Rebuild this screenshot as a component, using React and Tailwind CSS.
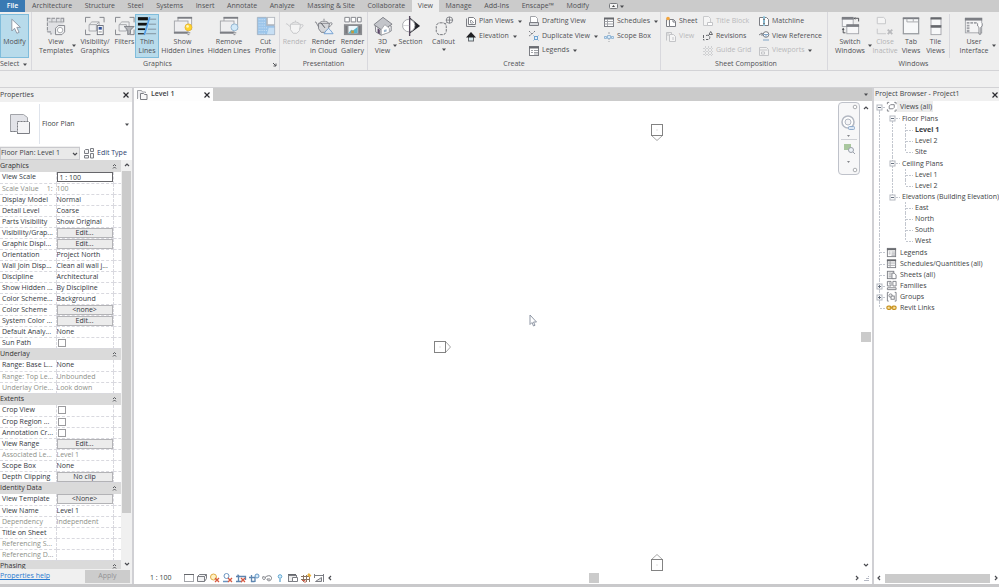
import { useState } from 'react';

const TABS = [
  'Architecture', 'Structure', 'Steel', 'Systems', 'Insert', 'Annotate', 'Analyze',
  'Massing & Site', 'Collaborate', 'View', 'Manage', 'Add-Ins', 'Enscape™', 'Modify',
];

const PROPERTY_GROUPS = [
  {
    title: 'Graphics',
    rows: [
      { label: 'View Scale', value: '1 : 100', type: 'input' },
      { label: 'Scale Value', suffix: '1:', value: '100', muted: true },
      { label: 'Display Model', value: 'Normal' },
      { label: 'Detail Level', value: 'Coarse' },
      { label: 'Parts Visibility', value: 'Show Original' },
      { label: 'Visibility/Grap...', value: 'Edit...', type: 'button' },
      { label: 'Graphic Displ...', value: 'Edit...', type: 'button' },
      { label: 'Orientation', value: 'Project North' },
      { label: 'Wall Join Disp...', value: 'Clean all wall j...' },
      { label: 'Discipline', value: 'Architectural' },
      { label: 'Show Hidden ...', value: 'By Discipline' },
      { label: 'Color Scheme...', value: 'Background' },
      { label: 'Color Scheme', value: '<none>', type: 'button' },
      { label: 'System Color ...', value: 'Edit...', type: 'button' },
      { label: 'Default Analy...', value: 'None' },
      { label: 'Sun Path', type: 'checkbox' },
    ],
  },
  {
    title: 'Underlay',
    rows: [
      { label: 'Range: Base L...', value: 'None' },
      { label: 'Range: Top Le...', value: 'Unbounded', muted: true },
      { label: 'Underlay Orie...', value: 'Look down', muted: true },
    ],
  },
  {
    title: 'Extents',
    rows: [
      { label: 'Crop View', type: 'checkbox' },
      { label: 'Crop Region ...', type: 'checkbox' },
      { label: 'Annotation Cr...', type: 'checkbox' },
      { label: 'View Range', value: 'Edit...', type: 'button' },
      { label: 'Associated Le...', value: 'Level 1', muted: true },
      { label: 'Scope Box', value: 'None' },
      { label: 'Depth Clipping', value: 'No clip', type: 'button' },
    ],
  },
  {
    title: 'Identity Data',
    rows: [
      { label: 'View Template', value: '<None>', type: 'button' },
      { label: 'View Name', value: 'Level 1' },
      { label: 'Dependency', value: 'Independent', muted: true },
      { label: 'Title on Sheet', value: '' },
      { label: 'Referencing S...', value: '', muted: true },
      { label: 'Referencing D...', value: '', muted: true },
    ],
  },
  { title: 'Phasing', rows: [] },
];

// guides: one character per indent column
//   | line passing through, T branch, L last branch, space nothing
//   o first open box, - open box, e last open box, + closed box
const TREE = [
  { text: 'Views (all)', guides: 'o', icon: 'views', selected: true },
  { text: 'Floor Plans', guides: '|o', group: true },
  { text: 'Level 1', guides: '||T', bold: true },
  { text: 'Level 2', guides: '||T' },
  { text: 'Site', guides: '||L' },
  { text: 'Ceiling Plans', guides: '|-', group: true },
  { text: 'Level 1', guides: '||T' },
  { text: 'Level 2', guides: '||L' },
  { text: 'Elevations (Building Elevation)', guides: '|e' },
  { text: 'East', guides: '| T' },
  { text: 'North', guides: '| T' },
  { text: 'South', guides: '| T' },
  { text: 'West', guides: '| L' },
  { text: 'Legends', guides: 'T', icon: 'legends', group: true },
  { text: 'Schedules/Quantities (all)', guides: 'T', icon: 'schedule' },
  { text: 'Sheets (all)', guides: 'T', icon: 'sheets' },
  { text: 'Families', guides: '+', icon: 'families' },
  { text: 'Groups', guides: '+', icon: 'groups' },
  { text: 'Revit Links', guides: 'L', icon: 'links' },
];

const INK = '#7c7e84';
const SOFT = '#a2a4a9';

/* ---------- large ribbon icons, 22 x 22 ---------- */

const BIG_ICONS = {
  cursor: (
    <path d="M7.500 3.500v13l3-3 2.500 5.500 2.500-1-2.500-5.500h4z" fill="#fff" stroke="#8b93a0" />
  ),
  templates: (
    <>
      <path d="M2 3h17v6l-8 2v9H5l-3-3z" fill="#dfe0e3" />
      <path d="M1 2.500h19M1.500 2v15.500M1.500 17.500h4v3M19.500 3v5" fill="none" stroke={INK} strokeDasharray="4 1" />
      <path d="M3 6.500h16M6.500 3v4M11.500 3v4M16.500 3v4" stroke={SOFT} />
      <path d="M10.500 13.500l3-3h7v7l-3 3h-7z" fill="#f4f4f5" stroke={INK} />
      <circle cx="15.500" cy="15.500" r="3" fill="#fff" stroke={SOFT} />
    </>
  ),
  visibility: (
    <>
      <path d="M.5 7V1.500H6M16 1.500h5V7M.5 15v5.500H6" fill="none" stroke={INK} />
      <path d="M4.500 9.500l3-3h8v7l-3 3h-8z" fill="#eeeff0" stroke={SOFT} />
      <path d="M4.500 9.500h8v7M12.500 9.500l3-3" fill="none" stroke={SOFT} />
      <rect x="13.500" y="10.500" width="6.500" height="10" fill="#fff" stroke="#6b6e78" />
      <rect x="15" y="12" width="3.500" height="3" fill="#33549a" />
      <path d="M15 17.500h3.500" stroke="#888" />
    </>
  ),
  filters: (
    <>
      <path d="M.5 7V1.500H6M16 1.500h5V7M.5 15v5.500H6M16 20.500h5V15" fill="none" stroke={INK} />
      <path d="M4.500 9.500l3-3h8v7l-3 3h-8z" fill="#eeeff0" stroke={SOFT} />
      <path d="M4.500 9.500h8v7" fill="none" stroke={SOFT} />
      <path d="M10 11.500h11l-4 4v4l-3 1v-5z" fill="#b4b6ba" stroke={INK} />
    </>
  ),
  thin: (
    <>
      <path d="M1 3h11" stroke="#111" strokeWidth="3.500" />
      <path d="M1 9h10" stroke="#111" strokeWidth="3" />
      <path d="M1 14.500h8" stroke="#111" strokeWidth="2" />
      <path d="M1 19.500h7" stroke="#333" strokeWidth="1.500" />
      <path d="M14 3.500h7M13 9h8M12 14.500h9M10 19.500h11" stroke="#7c8b98" />
      <path d="M14 1L8 21" stroke="#4f9be6" strokeWidth="1.800" />
    </>
  ),
  bulb: (
    <>
      <rect x="5.500" y="1.500" width="15" height="13" fill="#f4f4f5" stroke={SOFT} />
      <path d="M5 2h16" stroke={INK} strokeWidth="2" />
      <rect x="1.500" y="5.500" width="15" height="12" fill="#eeeef0" stroke={SOFT} />
      <path d="M1 18.500h15" stroke={INK} strokeWidth="2" />
      <circle cx="17" cy="12.500" r="3.800" fill="#ffd42a" stroke="#e6b535" />
      <circle cx="16" cy="11.500" r="1.500" fill="#fff6bd" />
      <path d="M15 18.500h4M16 20.500h2" stroke={INK} />
    </>
  ),
  bulbOff: (
    <>
      <rect x="5.500" y="1.500" width="15" height="13" fill="#f4f4f5" stroke={SOFT} />
      <path d="M5 2h16" stroke={INK} strokeWidth="2" />
      <rect x="1.500" y="5.500" width="15" height="12" fill="#eeeef0" stroke={SOFT} />
      <path d="M1 18.500h15" stroke={INK} strokeWidth="2" />
      <circle cx="17" cy="12.500" r="3.800" fill="#d3e9f8" stroke="#8fb3cf" />
      <path d="M15 18.500h4M16 20.500h2" stroke={INK} />
    </>
  ),
  cut: (
    <>
      <path d="M1.500 1.500h10v9h9v10h-19z" fill="#9cc5ea" stroke="#a5b3c2" />
      <path d="M3 4h7M3 7h7M3 10h7M3 13h10M3 16h9M3 19h8" stroke="#d3e6f7" strokeDasharray="1 1" />
      <path d="M14 13h6v7h-8z" fill="#c7dff4" />
      <rect x="12.500" y="1.500" width="8" height="8" fill="#f7f8f9" stroke="#b4b9c0" />
    </>
  ),
  teapot: (
    <>
      <path d="M6 9h11l-1 7-3 3H9l-3-4z" fill="#f4f4f4" stroke="#c3c4c7" />
      <path d="M6 12L2 8.500 1 9M17 10c4-2 4 2-1 4M7 9c1-3 8-3 9 0M11.500 6.500V5" fill="none" stroke="#c3c4c7" />
    </>
  ),
  teapotCloud: (
    <>
      <path d="M5 8h12l-1 6-4 4H8l-3-4z" fill="#d5d6d9" stroke={INK} />
      <path d="M5 12L2 6.500 1 7M17 8c4-2 4 2-1 4M6 8c1-3 9-3 10 0M11 5V3" fill="none" stroke={INK} />
      <path d="M8 8l4 5" stroke="#4d4f56" />
      <path d="M11 19.500l2-3 3-3 2 2 3 4z" fill="#e3eefa" stroke="#6d9dd0" />
    </>
  ),
  gallery: (
    <>
      <path d="M2 1.500h5v5H2zM9 1.500h5v5H9zM16 1.500h4v5h-4z" fill="#fff" stroke={INK} />
      <rect x="1" y="9" width="20" height="12" fill="#8b8d91" />
      <rect x="6" y="11" width="10" height="8" fill="#eef7fb" />
      <path d="M6 19l3-4 2 1 5-4v7z" fill="#58b4cb" />
      <rect x="9" y="16" width="3" height="3" fill="#c59a3a" />
      <path d="M3.500 11v8M18.500 11v8" stroke="#6c6e72" />
    </>
  ),
  house: (
    <>
      <path d="M2.500 10L9 15.500V21l-6-3.500zM9 15.500l5-6 6 1.500v5.500L9 21z" fill="#f2f2f4" stroke={INK} />
      <path d="M1 9.500L11 1.500 21 9l-7 4.500L9 15z" fill="#c3c5ca" stroke={INK} />
      <path d="M9 21v-6l4-5.500 5 4V18z" fill="#fff" stroke={SOFT} />
      <path d="M5 18.500v-5l2.500 1.500v5z" fill="#5b4668" />
      <path d="M12 15.500l3-1v2.500l-3 1z" fill="#9ab3ca" />
    </>
  ),
  section: (
    <>
      <path d="M10 2l11 9-11 8z" fill="#22242a" />
      <circle cx="8.500" cy="10.500" r="6.800" fill="#fff" stroke={SOFT} />
      <path d="M9.500 0v22" stroke="#56495e" strokeWidth="1.500" />
      <path d="M2 10.500h7" stroke="#d3d5d8" />
    </>
  ),
  callout: (
    <>
      <rect x="2.500" y="7.500" width="11" height="13" rx="4" fill="none" stroke="#66686d" strokeDasharray="3 1" />
      <circle cx="17" cy="4.500" r="3.500" fill="#f4f4f4" stroke={INK} />
      <path d="M13 4.500h8M17 1v7M14 7l-2 2" stroke={INK} />
    </>
  ),
  switchWin: (
    <>
      <rect x="2.500" y="2.500" width="12" height="9" fill="#f7f7f8" stroke={SOFT} />
      <path d="M2 2.500h13" stroke={INK} strokeWidth="3" />
      <rect x="7.500" y="10.500" width="13" height="9" fill="#f7f7f8" stroke={SOFT} />
      <path d="M7 10.500h14" stroke={INK} strokeWidth="3" />
      <path d="M17 2.500h3.500V6M3.500 14v4.500H6" fill="none" stroke="#44464b" />
      <path d="M17 1v3l-2-1.500zM2 15h3l-1.500-2z" fill="#44464b" />
    </>
  ),
  closeInactive: (
    <>
      <path d="M2.500 1.500h7l2 2v5h-9z" fill="#f5f5f5" stroke="#c3c4c7" />
      <path d="M2.500 14v5.500H12" fill="none" stroke="#c3c4c7" />
      <path d="M14 15l5 5M19 15l-5 5" stroke="#b9babd" strokeWidth="2" />
    </>
  ),
  tabViews: (
    <>
      <rect x="2.500" y="2.500" width="17" height="17" fill="#f7f8f9" stroke={INK} />
      <path d="M2 2.500h18" stroke={INK} strokeWidth="2" />
      <path d="M6.500 3v3.500h13M13.500 3v3" stroke={SOFT} fill="none" />
      <path d="M2 19.500h18" stroke={SOFT} />
    </>
  ),
  tileViews: (
    <>
      <rect x="5.500" y="2.500" width="11" height="8" fill="#f7f8f9" stroke={SOFT} />
      <rect x="5.500" y="12.500" width="11" height="8" fill="#f7f8f9" stroke={SOFT} />
      <path d="M5 2.500h12M5 11.500h12" stroke="#66686d" strokeWidth="2.500" />
    </>
  ),
  userInterface: (
    <>
      <rect x="1.500" y="2.500" width="18" height="16" fill="#f4f4f5" stroke={SOFT} />
      <path d="M1 3.500h19" stroke={INK} strokeWidth="3" />
      <path d="M3 7.500h12M3 10.500h3M3 13.500h3M3 16.500h3" stroke={SOFT} strokeDasharray="3 1" strokeWidth="2" />
      <path d="M15 8v3l1.500 1.500V20h2v-7.500L20 11V8" fill="#fff" stroke={INK} />
    </>
  ),
};

/* ---------- small icons, 12 x 12 ---------- */

const SMALL_ICONS = {
  plan: (
    <>
      <path d="M1.500 2.500v8h9" fill="none" stroke={INK} />
      <path d="M3.500 1.500h5l2 2v5h-7z" fill="#fff" stroke={INK} />
      <path d="M5.500 4v3h2.500M6 4l3 3" fill="none" stroke={SOFT} />
    </>
  ),
  elevation: (
    <>
      <rect x="3.500" y="5.500" width="5" height="4.500" fill="#d5e8ec" stroke="#66686d" />
      <path d="M6 1L1 6.500h10z" fill="#1f2023" />
    </>
  ),
  drafting: (
    <>
      <path d="M2.500 1.500h5l2 2v4h-7z" fill="#fff" stroke={SOFT} />
      <path d="M1.500 7.500h9v3h-9z" fill="#d5d7da" stroke={INK} />
    </>
  ),
  duplicate: (
    <>
      <path d="M1 1l3 3M7 1L4 4M1 6l3-2" stroke={INK} strokeDasharray="2 1" />
      <path d="M5.500 5.500l5 5M10.500 5.500l-5 5" stroke="#7fadd6" />
      <rect x="6.500" y="6.500" width="3" height="3" fill="#e4effa" stroke="#6fa3d0" />
    </>
  ),
  legends: (
    <>
      <rect x="1.500" y="1.500" width="9" height="9" fill="#fff" stroke={INK} />
      <path d="M1 2.500h10" stroke="#6a6c70" strokeWidth="2" />
      <path d="M3 5.500h2M3 7.500h2M6 5.500h4M6 7.500h4M6 9h4" stroke={SOFT} />
    </>
  ),
  schedule: (
    <>
      <rect x="1.500" y="2.500" width="9" height="8" fill="#fff" stroke={INK} />
      <path d="M1 2.500h10" stroke="#66686d" strokeWidth="2" />
      <path d="M1.500 5.500h9M1.500 8h9M4.500 3v7" stroke={SOFT} />
    </>
  ),
  scopeBox: (
    <>
      <path d="M1.500 6h9M6 1v10" stroke={SOFT} strokeDasharray="2 1" />
      <path d="M4.500 4.500h3v3h-3zM8.500 5.500h2v2h-2zM1.500 5.500h2v2h-2z" fill="#d8e9f7" stroke="#86aed2" strokeWidth=".8" />
    </>
  ),
  sheet: (
    <>
      <path d="M1.500 3.500v7h3M4.500 3.500h4l2 2v5h-6z" fill="#fff" stroke={INK} />
      <path d="M8 3.500v2.500h2.500" fill="none" stroke={INK} />
      <circle cx="3" cy="2.500" r="1.800" fill="#f3a43c" />
    </>
  ),
  viewOff: (
    <>
      <path d="M1.500 9.500v-8h5v2" fill="none" stroke="#c3c4c7" />
      <path d="M4.500 3.500h4l2 2v5h-6z" fill="#f5f5f5" stroke="#c3c4c7" />
      <path d="M3 2v3M8 6v3" stroke="#c3c4c7" />
    </>
  ),
  titleBlock: (
    <>
      <path d="M1.500 1.500h5l2 2v7h-7z" fill="#f5f5f5" stroke="#c9cacc" />
      <path d="M5.500 7.500h5v3h-5z" fill="#fff" stroke="#c3c4c7" />
    </>
  ),
  revisions: (
    <>
      <path d="M1.500 5v5h1M4 5.500c3-1 5 1 3 4H4" fill="none" stroke="#66686d" strokeDasharray="3 1" />
      <path d="M7 4.500l1.700-3 1.800 3z" fill="#fff" stroke="#66686d" />
    </>
  ),
  guideGrid: <path d="M3.500 1v10M6.500 1v10M9.500 1v10M1 3.500h10M1 6.500h10M1 9.500h10" stroke="#cfd0d2" strokeDasharray="2 1" />,
  matchline: (
    <>
      <path d="M1.500 2.500h4v8h-4zM6.500 2.500h2l2 2v6h-4z" fill="#fff" stroke={INK} />
      <path d="M6 1v10" stroke="#8ccbe5" strokeWidth="1.500" strokeDasharray="3 1" />
    </>
  ),
  viewReference: (
    <>
      <path d="M1 5l3-2v3M4 4h2" fill="none" stroke={INK} />
      <circle cx="8" cy="4.500" r="2.800" fill="#fff" stroke={INK} />
      <path d="M5.500 4.500h5M8 4.500V7M5 10h6" stroke="#7fa3c6" />
    </>
  ),
  viewports: (
    <>
      <path d="M1.500 2.500h7l2 2v6h-9z" fill="#f2f2f2" stroke="#c3c4c7" />
      <path d="M1.500 5h8M3.500 7h3v2h-3z" fill="#fff" stroke="#c3c4c7" />
    </>
  ),
  views: (
    <>
      <path d="M1.500 3.500v-2h2M9 1.500h2v2M1.500 9v2h2M9 11h2V9" fill="none" stroke={INK} />
      <path d="M3.500 5.500l1.500-1.500h4V7L7.500 8.500h-4z" fill="#fff" stroke={INK} />
    </>
  ),
  sheets: (
    <>
      <rect x="1.500" y="2.500" width="7" height="8" fill="#f3f3f3" stroke={INK} />
      <path d="M3 4.500h3M3 6.500h3M3 8.500h3" stroke={SOFT} />
      <path d="M6.500 4.500h2.500l2 2v4H6.500z" fill="#fff" stroke={INK} />
    </>
  ),
  families: (
    <>
      <path d="M1.500 1.500h4v5h-4zM7.500 1.500h3.500v5H7.500zM1.500 8.500h9.500v2H1.500z" fill="#fff" stroke={INK} />
      <path d="M3 3h1v2" fill="none" stroke={SOFT} />
    </>
  ),
  groups: (
    <>
      <path d="M3 1.500H1.500v9.500H3M9.500 1.500H11v9.500H9.500" fill="none" stroke={INK} />
      <circle cx="5" cy="5" r="1.800" fill="#fff" stroke={INK} />
      <rect x="5.500" y="5.500" width="3.500" height="3.500" fill="#fff" stroke={INK} />
    </>
  ),
  links: (
    <>
      <rect x="1" y="4.500" width="4.500" height="3.500" rx="1.500" fill="#f8e3a5" stroke="#c8921f" strokeWidth="1.300" />
      <rect x="6.500" y="4.500" width="4.500" height="3.500" rx="1.500" fill="#f8e3a5" stroke="#c8921f" strokeWidth="1.300" />
      <path d="M4 6.200h4" stroke="#c8921f" />
    </>
  ),
  editType: (
    <>
      <path d="M1.500 3.500l1-1h3v4h-4zM1.500 8.500h4v2.500h-4zM7.500 1.500h3v3h-3zM7.500 6.500h3V11h-3z" fill="#f4f5f6" stroke={INK} />
    </>
  ),
  planTab: (
    <>
      <path d="M1.500 10V1.500h4l1 1.500h3v1" fill="#ededf0" stroke={SOFT} />
      <path d="M4.500 4.500h3l1 1h2.500v5H4.500z" fill="#f8f8f9" stroke={INK} />
    </>
  ),
  // view control bar
  paper: <><rect x="1.500" y="2.500" width="9" height="7" fill="#fff" stroke={SOFT} /><path d="M1 2.500h10" stroke="#66686d" /></>,
  cube: <><path d="M1.500 4.500l2-2h7v4l-2 3h-7z" fill="#f2f2f3" stroke={INK} /><path d="M1.500 4.500h7v5M8.500 4.500l2-2" fill="none" stroke={INK} /></>,
  sunOff: <><circle cx="4.500" cy="5" r="3" fill="#fff3c4" stroke="#e0aa45" /><path d="M6 6l4 4M10 6l-4 4" stroke="#d8583f" strokeWidth="1.300" /></>,
  shadowOff: <><circle cx="4.500" cy="4" r="2.500" fill="#fff" stroke="#6a94c0" /><path d="M1 9.500h5" stroke="#6a94c0" strokeWidth="1.500" /><path d="M6 6l4 4M10 6l-4 4" stroke="#d8583f" strokeWidth="1.300" /></>,
  cropOff: <><path d="M1 4.500h2v-2M3.500 3v6M3 4.500h7.500V8M1 9.500h6" fill="none" stroke="#5d85b0" strokeWidth="1.300" /><path d="M6 6l4 4M10 6l-4 4" stroke="#d8583f" strokeWidth="1.300" /></>,
  cropHide: <><path d="M3.500 3v6.500h3M1 5.500h6v4.500" fill="none" stroke="#5d85b0" strokeWidth="1.300" /><circle cx="9" cy="4" r="2" fill="#d8ebfa" stroke="#6598c6" /></>,
  glasses: <path d="M1 5.500c2-2 4 0 3 1.500s-3 0-2-1.500M4 5.500c3-3 7-2 6.500 1-.5 3-4.500 3-4.500.500M6 7h3" fill="none" stroke={INK} />,
  lamp: <><circle cx="6" cy="4.500" r="1.800" fill="#d8effc" stroke="#5fa5cf" /><path d="M6 7v3" stroke="#5fa5cf" strokeWidth="1.300" /></>,
  tempView: <><rect x="1.500" y="3.500" width="8" height="6" fill="#eee" stroke={INK} /><path d="M1 2.500h8" stroke="#66686d" /><path d="M5.500 5.500h5v4h-5z" fill="#fff" stroke={INK} /></>,
  analytic: <><path d="M1 4.500h9M1 7.500h9M3.500 3v7M6.500 3v7M9.500 3v7" stroke="#8a7462" /><path d="M8 2l2.500 2.500" stroke="#edb23b" strokeWidth="2.500" /><path d="M2 8.500h3V11" fill="none" stroke="#c9604c" /></>,
  constraint: <><path d="M1 3.500h10M1.500 2v4M10.500 2v8" stroke={INK} /><path d="M2.500 9.500l6-4v4z" fill="#e2e3e5" stroke={INK} /></>,
};

function BigIcon({ name }) {
  return <svg viewBox="0 0 22 22" className="my-px h-5 w-5 shrink-0" aria-hidden="true">{BIG_ICONS[name]}</svg>;
}

function SmallIcon({ name, className }) {
  return (
    <svg viewBox="0 0 12 12" className={`shrink-0 ${className || 'h-3 w-3'}`} aria-hidden="true">
      {SMALL_ICONS[name]}
    </svg>
  );
}

function Caret() {
  return <svg viewBox="0 0 4 3" className="h-[3px] w-1 shrink-0" aria-hidden="true"><path d="M0 .5h4L2 3z" fill="#4b4c50" /></svg>;
}

function Chevron({ className }) {
  return (
    <svg viewBox="0 0 6 6" className={`h-1.5 w-1.5 shrink-0 ${className || ''}`} aria-hidden="true">
      <path d="M1 2l2 2 2-2" fill="none" stroke="#4a4b50" strokeWidth="1.200" />
    </svg>
  );
}

function CloseButton({ label }) {
  return (
    <button type="button" aria-label={label} className="flex h-3 w-3 shrink-0 items-center justify-center">
      <svg viewBox="0 0 6 6" className="h-1.5 w-1.5"><path d="M.5 .5l5 5M5.500 .5l-5 5" stroke="#2b2b30" strokeWidth="1.200" /></svg>
    </button>
  );
}

/**
 * Tall ribbon button: icon above one or two lines of text.
 */
function BigButton({ icon, lines, width, caret, caretBelow, active, disabled }) {
  return (
    <button
      type="button"
      disabled={disabled}
      className={`relative flex h-11 shrink-0 flex-col items-center whitespace-nowrap leading-[9px] ${width} ${
        active ? 'border border-[#7fbcdb] bg-[#b8dbeb]' : 'border border-transparent'
      } ${disabled ? 'text-[#b4b4b6]' : ''}`}
    >
      <BigIcon name={icon} />
      {lines.map((line) => <span key={line}>{line}</span>)}
      {caret && <span className="absolute -right-px bottom-2.5"><Caret /></span>}
      {caretBelow && <span className="mt-0.5"><Caret /></span>}
    </button>
  );
}

function SmallButton({ icon, text, caret, disabled }) {
  return (
    <button
      type="button"
      disabled={disabled}
      className={`flex h-[15px] items-center gap-0.5 whitespace-nowrap ${disabled ? 'text-[#b9b9bb]' : ''}`}
    >
      <SmallIcon name={icon} />
      <span>{text}</span>
      {caret && <span className="ml-0.5"><Caret /></span>}
    </button>
  );
}

function Panel({ title, children, launcher, className }) {
  return (
    <section className={`flex shrink-0 flex-col border-r border-[#d8d8dd] pt-0.5 ${className || ''}`}>
      <div className="flex h-11">{children}</div>
      <div className="relative flex h-3 items-center justify-center">
        {title}
        {launcher && (
          <svg viewBox="0 0 5 5" className="absolute right-0.5 h-[5px] w-[5px]" aria-hidden="true">
            <path d="M1 1l3 3M4 1.500V4H1.500" fill="none" stroke="#55575b" />
          </svg>
        )}
      </div>
    </section>
  );
}

function Ribbon() {
  const [activeTab, setActiveTab] = useState('View');

  return (
    <header className="shrink-0 overflow-hidden text-[#505155]">
      <nav className="flex h-3 bg-[#cbcbcb] leading-3">
        <button type="button" className="w-[25px] bg-[#3a7ab3] font-semibold text-white">File</button>
        <div className="ml-px flex w-[569px] justify-between">
          {TABS.map((tab) => (
            <button
              key={tab}
              type="button"
              onClick={() => setActiveTab(tab)}
              className={`whitespace-nowrap px-1.5 ${tab === activeTab ? 'bg-[#eeeeee]' : ''}`}
            >
              {tab}
            </button>
          ))}
        </div>
        <button type="button" aria-label="Minimize ribbon" className="ml-3.5 flex items-center gap-0.5">
          <svg viewBox="0 0 9 6" className="h-1.5 w-[9px]"><rect x=".5" y=".5" width="8" height="5" rx="1" fill="#f3f3f3" stroke="#77797d" /><path d="M3 4l1.500-2L6 4z" fill="#444" /></svg>
          <Caret />
        </button>
      </nav>

      <div className="flex h-[59px] border-b border-[#d3d3d6] bg-[#eeeeee]">
        <section className="flex w-8 shrink-0 flex-col border-r border-[#d8d8dd] pt-0.5">
          <BigButton icon="cursor" lines={['Modify']} width="w-[29px]" active />
          <button type="button" className="flex h-3 items-center gap-1 whitespace-nowrap">Select <Caret /></button>
        </section>

        <Panel title="Graphics" launcher className="pl-1">
          <BigButton icon="templates" lines={['View', 'Templates']} width="w-10" caret />
          <BigButton icon="visibility" lines={['Visibility/', 'Graphics']} width="w-[38px]" />
          <BigButton icon="filters" lines={['Filters']} width="w-[21px]" />
          <BigButton icon="thin" lines={['Thin', 'Lines']} width="w-6" active />
          <BigButton icon="bulb" lines={['Show', 'Hidden Lines']} width="w-[47px]" />
          <BigButton icon="bulbOff" lines={['Remove', 'Hidden Lines']} width="w-[46px]" />
          <BigButton icon="cut" lines={['Cut', 'Profile']} width="w-[27px]" />
        </Panel>

        <Panel title="Presentation">
          <BigButton icon="teapot" lines={['Render']} width="w-[29px]" disabled />
          <BigButton icon="teapotCloud" lines={['Render', 'in Cloud']} width="w-[29px]" />
          <BigButton icon="gallery" lines={['Render', 'Gallery']} width="w-[29px]" />
        </Panel>

        <Panel title="Create">
          <BigButton icon="house" lines={['3D', 'View']} width="w-[29px]" caret />
          <BigButton icon="section" lines={['Section']} width="w-[27px]" />
          <BigButton icon="callout" lines={['Callout']} width="w-[39px]" caretBelow />
          <div className="flex w-[65px] flex-col pl-0.5">
            <SmallButton icon="plan" text="Plan Views" caret />
            <SmallButton icon="elevation" text="Elevation" caret />
          </div>
          <div className="flex w-[75px] flex-col">
            <SmallButton icon="drafting" text="Drafting View" />
            <SmallButton icon="duplicate" text="Duplicate View" caret />
            <SmallButton icon="legends" text="Legends" caret />
          </div>
          <div className="flex w-[57px] flex-col">
            <SmallButton icon="schedule" text="Schedules" caret />
            <SmallButton icon="scopeBox" text="Scope Box" />
          </div>
        </Panel>

        <Panel title="Sheet Composition" className="pl-1">
          <div className="flex w-[37px] flex-col">
            <SmallButton icon="sheet" text="Sheet" />
            <SmallButton icon="viewOff" text="View" disabled />
          </div>
          <div className="flex w-14 flex-col">
            <SmallButton icon="titleBlock" text="Title Block" disabled />
            <SmallButton icon="revisions" text="Revisions" />
            <SmallButton icon="guideGrid" text="Guide Grid" disabled />
          </div>
          <div className="flex w-[69px] flex-col">
            <SmallButton icon="matchline" text="Matchline" />
            <SmallButton icon="viewReference" text="View Reference" />
            <SmallButton icon="viewports" text="Viewports" caret disabled />
          </div>
        </Panel>

        <section className="flex flex-1 flex-col pt-0.5">
          <div className="flex h-11">
            <BigButton icon="switchWin" lines={['Switch', 'Windows']} width="w-11" caret />
            <BigButton icon="closeInactive" lines={['Close', 'Inactive']} width="w-[26px]" disabled />
            <BigButton icon="tabViews" lines={['Tab', 'Views']} width="w-[26px]" />
            <BigButton icon="tileViews" lines={['Tile', 'Views']} width="w-[23px]" />
            <div className="mx-0.5 w-px bg-[#d8d8dd]" />
            <BigButton icon="userInterface" lines={['User', 'Interface']} width="w-11" caret />
          </div>
          <div className="flex h-3 items-center justify-center">Windows</div>
        </section>
      </div>
    </header>
  );
}

function PropertyValue({ row, id }) {
  if (row.type === 'button') {
    return (
      <button type="button" id={id} className="block h-2.5 w-full border border-[#b3b3b6] bg-[#ececec] text-center leading-2">
        {row.value}
      </button>
    );
  }
  if (row.type === 'checkbox') {
    return <input id={id} type="checkbox" className="ml-px block h-2 w-2 appearance-none border border-[#9b9b9e] bg-white" />;
  }
  if (row.type === 'input') {
    return <input id={id} type="text" defaultValue={row.value} className="block h-2.5 w-full border border-[#66666a] bg-white px-0.5 leading-2" />;
  }
  return <span className="block truncate">{row.value}</span>;
}

function PropertiesPanel() {
  return (
    <aside className="flex w-[134px] shrink-0 flex-col border-r-2 border-[#d0d0d4] bg-[#f0f0f0]">
      <div className="flex h-[14px] shrink-0 items-center justify-between">
        <h2>Properties</h2>
        <CloseButton label="Close properties" />
      </div>

      <button type="button" className="flex h-11 shrink-0 items-center bg-white pr-[3px] text-left">
        <span className="flex h-10 w-10 items-center justify-center border-r border-[#dfe4ec]">
          <svg viewBox="0 0 22 22" className="h-[22px] w-[22px]" aria-hidden="true">
            <path d="M1.500 1.500h13l4 3v4h-10v10h-7z" fill="#e2e3e8" stroke={SOFT} />
            <path d="M8.500 8.500h9l3 2v10h-12z" fill="#f4f4f6" />
            <path d="M1.500 18.500h6M8.500 20.500v-12h12" fill="none" stroke={INK} strokeDasharray="2 1" />
            <path d="M20.500 9v11.500H8" fill="none" stroke={INK} />
          </svg>
        </span>
        <span className="ml-0.5 flex-1">Floor Plan</span>
        <Caret />
      </button>

      <div className="flex h-3.5 shrink-0 items-center">
        <div className="relative w-20">
          <select aria-label="Element filter" className="block h-[13px] w-full appearance-none border border-[#c9c9cd] bg-[#e9e9e9] bg-none pr-2">
            <option>Floor Plan: Level 1</option>
          </select>
          <Chevron className="absolute top-1 right-0.5" />
        </div>
        <button type="button" className="flex h-full flex-1 items-center gap-0.5 bg-white pl-[3px] whitespace-nowrap text-[#2c3e6b]">
          <SmallIcon name="editType" />
          Edit Type
        </button>
      </div>

      <div className="flex min-h-0 flex-1 bg-white">
        <div className="min-w-0 flex-1 overflow-hidden">
          <table className="w-full table-fixed border-collapse leading-2.5">
            <colgroup>
              <col className="w-[56px]" />
              <col />
              <col className="w-2" />
            </colgroup>
            {PROPERTY_GROUPS.map((group) => (
              <tbody key={group.title}>
                <tr className="h-3 bg-[#dadada]">
                  <th colSpan={3} className="p-0 text-left font-normal text-[#333]">
                    <div className="flex items-center justify-between pr-1">
                      {group.title}
                      <svg viewBox="0 0 5 7" className="h-[7px] w-[5px]" aria-hidden="true">
                        <path d="M1 3l1.500-1.500L4 3M1 5.500L2.500 4 4 5.500" fill="none" stroke="#55575b" />
                      </svg>
                    </div>
                  </th>
                </tr>
                {group.rows.map((row, index) => {
                  const id = `${group.title.replace(' ', '-')}-${index}`;
                  return (
                    <tr key={row.label} className={`h-[11px] ${row.muted ? 'text-[#8d9089]' : 'text-[#33373d]'}`}>
                      <td className="border-b border-r border-dashed border-[#d9d9df] p-0 pl-0.5">
                        <label htmlFor={row.type ? id : undefined} className="flex justify-between whitespace-nowrap pr-[3px]">
                          <span>{row.label}</span>
                          {row.suffix && <span>{row.suffix}</span>}
                        </label>
                      </td>
                      <td className="border-b border-r border-dashed border-[#d9d9df] p-0"><PropertyValue row={row} id={id} /></td>
                      <td className="border-b border-dashed border-[#d9d9df] p-0" />
                    </tr>
                  );
                })}
              </tbody>
            ))}
          </table>
        </div>
        <div className="flex w-[11px] flex-col items-center bg-[#f0f0f0] py-0.5">
          <Chevron className="mb-[3px] rotate-180" />
          <div className="h-[342px] w-[9px] bg-[#cbcbcb]" />
          <Chevron className="mt-auto" />
        </div>
      </div>

      <div className="flex h-[15px] shrink-0 items-center justify-between pr-0.5">
        <a href="#help" className="text-[#2b7bd0] underline">Properties help</a>
        <button type="button" disabled className="h-[13px] w-[45px] bg-[#cccccc] text-[#929294]">Apply</button>
      </div>
    </aside>
  );
}

/**
 * Elevation marker on the drawing canvas: a square with an arrow head on one side.
 */
function ElevationMark({ className, turn }) {
  return (
    <svg viewBox="0 0 18 18" className={`absolute h-[18px] w-[18px] ${className}`} aria-hidden="true">
      <g transform={`rotate(${turn} 9 9)`} fill="#fff">
        <path d="M3.500 12.500L9 17.500l5.500-5" stroke="#a8a8a8" />
        <rect x="3.500" y="1.500" width="11" height="11" stroke="#838383" />
        <path d="M8.500 7h1" stroke="#c0c0c0" />
      </g>
    </svg>
  );
}

function NavigationBar() {
  return (
    <div className="absolute top-px right-0 flex h-[73px] w-[22px] justify-center rounded border border-[#bfc2ca] bg-[#f7f7f8] py-px">
      <svg viewBox="0 0 20 69" className="h-[69px] w-5" aria-hidden="true">
        <circle cx="16" cy="3" r="1.800" fill="#fff" stroke="#aaacb0" />
        <circle cx="16" cy="66" r="1.800" fill="#fff" stroke="#aaacb0" />
        <circle cx="9" cy="18" r="6" fill="#fff" stroke="#b3b8c2" strokeWidth="1.500" />
        <circle cx="9" cy="18" r="3" fill="#f4f4f6" stroke="#b3b8c2" />
        <rect x="9.500" y="22.500" width="6" height="3" rx="1" fill="#dbe6f3" stroke="#8fabcc" />
        <path d="M8 31h3l-1.500 2zM8 57h3l-1.500 2z" fill="#85878b" />
        <path d="M2 35.500h16" stroke="#cfd1d6" />
        <rect x="5" y="40" width="7" height="6" fill="#a9c79e" />
        <circle cx="12" cy="46" r="2.500" fill="#eef3f8" stroke="#9aa0aa" />
        <path d="M14 48l2 2" stroke="#9aa0aa" />
      </svg>
    </div>
  );
}

const CONTROL_ICONS = [
  'paper', 'cube', 'sunOff', 'shadowOff', 'cropOff', 'cropHide', 'glasses', 'lamp', 'tempView', 'analytic', 'constraint',
];

function DrawingArea() {
  return (
    <main className="flex min-w-0 flex-1 flex-col bg-white">
      <div className="flex h-[13px] shrink-0 items-center justify-between bg-[#cbcbcb] pr-1">
        <div className="flex h-full w-[79px] items-center bg-[#fdfdfd] pl-0.5">
          <SmallIcon name="planTab" />
          <span className="ml-[3px] flex-1 font-semibold">Level 1</span>
          <CloseButton label="Close view" />
        </div>
        <Caret />
      </div>

      <div className="flex min-h-0 flex-1">
        <div className="relative min-w-0 flex-1">
          <ElevationMark className="top-[22px] left-[514px]" turn={0} />
          <ElevationMark className="top-[237px] left-[299px]" turn={-90} />
          <ElevationMark className="bottom-0 left-[514px]" turn={180} />
          <svg viewBox="0 0 8 13" className="absolute top-[213px] left-[395px] h-[13px] w-2" aria-hidden="true">
            <path d="M1 1v9.500l2-2 1.500 3.500 1.500-.700L4.500 8H7.500z" fill="#fff" stroke="#8f97a5" />
          </svg>
          <NavigationBar />
        </div>
        <div className="flex w-3 flex-col items-center justify-between py-1">
          <Chevron className="rotate-180" />
          <div className="h-2.5 w-2.5 bg-[#cbcbcb]" />
          <Chevron />
        </div>
      </div>

      <div className="flex h-3 shrink-0 items-center pl-4">
        <span className="w-[33px]">1 : 100</span>
        <div className="flex items-center gap-px">
          {CONTROL_ICONS.map((name) => (
            <button key={name} type="button" aria-label={name}><SmallIcon name={name} /></button>
          ))}
        </div>
        <Chevron className="ml-0.5 rotate-90" />
        <div className="flex flex-1 items-center justify-center">
          <div className="h-2.5 w-2.5 bg-[#cbcbcb]" />
        </div>
        <Chevron className="-rotate-90" />
        <svg viewBox="0 0 8 8" className="mx-0.5 h-2 w-2" aria-hidden="true"><path d="M6 2.500h1M4 4.500h3M2 6.500h5" stroke="#b5b9c4" /></svg>
      </div>
    </main>
  );
}

/**
 * One indent column of the browser tree, with its connector lines.
 */
function Guide({ kind, narrow }) {
  const hasBox = 'o-e+'.includes(kind);
  const above = kind !== 'o';
  const below = !'Le'.includes(kind);
  return (
    <svg
      viewBox={narrow ? '0 0 10 12' : '0 0 13 12'}
      className={`h-3 shrink-0 ${narrow ? 'w-2.5' : 'w-[13px]'}`}
      aria-hidden="true"
    >
      {kind !== ' ' && (
        <g fill="none" stroke="#c3c7cf" strokeDasharray="2 1">
          {above && <path d="M3.500 0v6" />}
          {below && <path d="M3.500 6v6" />}
          {kind !== '|' && <path d="M4 6.500h7" />}
        </g>
      )}
      {hasBox && (
        <>
          <rect x="1" y="4" width="5" height="5" fill="#fff" stroke="#b3b7bf" />
          <path d="M2 6.500h3" stroke="#66707f" />
          {kind === '+' && <path d="M3.500 5v3" stroke="#66707f" />}
        </>
      )}
    </svg>
  );
}

function ProjectBrowser() {
  return (
    <aside className="flex w-[127px] shrink-0 flex-col border-l-2 border-[#d0d0d4] bg-white">
      <div className="flex h-[13px] shrink-0 items-center bg-[#f0f0f0] pl-px">
        <h2 className="flex-1 whitespace-nowrap">Project Browser - Project1</h2>
        <div className="-mr-0.5"><CloseButton label="Close project browser" /></div>
      </div>
      <ul className="min-h-0 flex-1 overflow-hidden pl-0.5">
        {TREE.map((node, index) => (
          <li key={index} className={`flex items-center whitespace-nowrap ${node.group ? 'h-3' : 'h-[11px]'}`}>
            {node.guides.split('').map((kind, column) => (
              <Guide key={column} kind={kind} narrow={Boolean(node.icon)} />
            ))}
            {node.icon && <SmallIcon name={node.icon} className="h-[11px] w-[11px]" />}
            <span
              className={`leading-[11px] ${node.icon ? 'pr-px pl-[3px]' : ''} ${node.selected ? 'bg-[#ececec]' : ''} ${
                node.bold ? 'font-bold' : ''
              }`}
            >
              {node.text}
            </span>
          </li>
        ))}
      </ul>
      <div className="flex h-3 shrink-0 items-center gap-[3px] pl-0.5">
        <Chevron className="rotate-90" />
        <div className="h-[9px] flex-1 bg-[#cbcbcb]" />
        <Chevron className="-rotate-90" />
      </div>
    </aside>
  );
}

export default function App() {
  return (
    <div className="flex h-screen flex-col overflow-hidden bg-[#f0f0f0] font-['Open_Sans','Noto_Sans',sans-serif] text-[7px] text-[#3d3f44]">
      <Ribbon />
      <div className="h-4 shrink-0" />
      <div className="flex min-h-0 flex-1 border-t border-b-3 border-t-[#d2d2d5] border-b-[#c9c9cb]">
        <PropertiesPanel />
        <DrawingArea />
        <ProjectBrowser />
      </div>
    </div>
  );
}
